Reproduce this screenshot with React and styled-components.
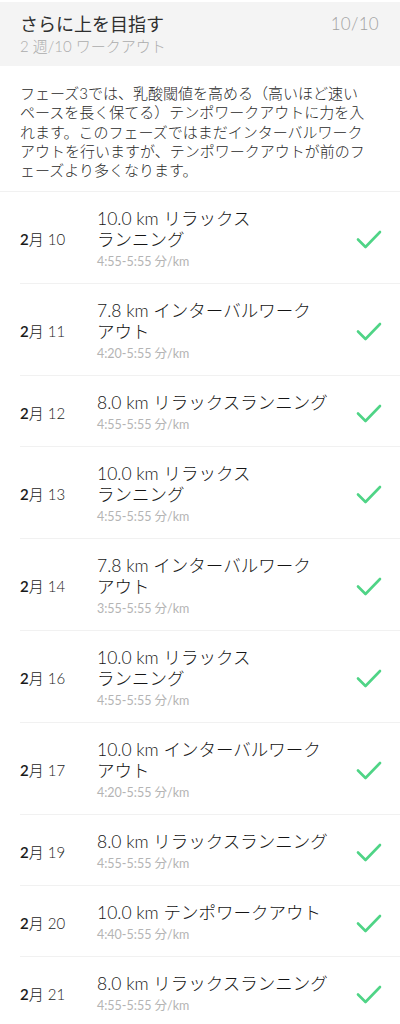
import React from "react";
import styled, { createGlobalStyle } from "styled-components";

const GlobalStyle = createGlobalStyle`
  html, body { margin: 0; padding: 0; background: #ffffff; }
  body {
    font-family: "Lato", "Noto Sans CJK JP", sans-serif;
    -webkit-font-smoothing: antialiased;
  }
`;

const Page = styled.div`
  width: 400px;
  background: #ffffff;
  padding-top: 2px;
`;

const Header = styled.header`
  background: #f4f4f4;
  height: 64px;
  padding: 0 21px 0 20px;
  box-sizing: border-box;
  display: grid;
  grid-template-columns: 1fr auto;
  align-content: center;
`;

const HeaderTitle = styled.h1`
  margin: 0;
  font-size: 18px;
  font-weight: 400;
  line-height: 24px;
  color: #2e2e2e;
`;

const Counter = styled.span`
  font-size: 17px;
  font-weight: 300;
  line-height: 24px;
  color: #a2a2a2;
  letter-spacing: 0.3px;
`;

const HeaderSub = styled.div`
  grid-column: 1 / span 2;
  font-size: 15px;
  font-weight: 300;
  line-height: 20px;
  color: #acacac;
`;

const Description = styled.p`
  margin: 0;
  padding: 18px 20px 11px 20px;
  font-size: 15px;
  font-weight: 300;
  line-height: 19.3px;
  color: #2a2a2a;
  border-bottom: 1px solid #f1f1f1;
`;

const List = styled.ul`
  list-style: none;
  margin: 0;
  padding: 0;
`;

const Row = styled.li`
  position: relative;
  display: grid;
  grid-template-columns: 77px 1fr 44px;
  align-items: center;
  padding: 16px 0 13px 20px;
  &:not(:first-child)::before {
    content: "";
    position: absolute;
    top: 0;
    left: 20px;
    right: 0;
    height: 1px;
    background: #f1f1f1;
  }
  &:not(:first-child) {
    padding-top: 17px;
  }
`;

const DateLabel = styled.div`
  font-size: 15px;
  font-weight: 300;
  color: #1a1a1a;
  line-height: 20px;
`;

const Month = styled.span`
  font-weight: 600;
`;

const Body = styled.div`
  display: flex;
  flex-direction: column;
`;

const Title = styled.div`
  font-size: 17.5px;
  font-weight: 300;
  line-height: 21px;
  color: #151515;
  white-space: pre-line;
`;

const Pace = styled.div`
  margin-top: 4px;
  font-size: 12.5px;
  font-weight: 400;
  line-height: 16px;
  color: #b4b4b4;
`;

const Check = styled.svg`
  width: 26px;
  height: 20px;
  justify-self: start;
`;

const CheckIcon = () => (
  <Check viewBox="0 0 26 20" aria-hidden="true">
    <path
      d="M2 10.5 L9.5 18 L24 3"
      fill="none"
      stroke="#4fd486"
      strokeWidth="2.6"
      strokeLinecap="round"
      strokeLinejoin="round"
    />
  </Check>
);

const workouts = [
  { d: "10", t: "10.0 km リラックス\nランニング", p: "4:55-5:55 分/km" },
  { d: "11", t: "7.8 km インターバルワーク\nアウト", p: "4:20-5:55 分/km" },
  { d: "12", t: "8.0 km リラックスランニング", p: "4:55-5:55 分/km" },
  { d: "13", t: "10.0 km リラックス\nランニング", p: "4:55-5:55 分/km" },
  { d: "14", t: "7.8 km インターバルワーク\nアウト", p: "3:55-5:55 分/km" },
  { d: "16", t: "10.0 km リラックス\nランニング", p: "4:55-5:55 分/km" },
  { d: "17", t: "10.0 km インターバルワーク\nアウト", p: "4:20-5:55 分/km" },
  { d: "19", t: "8.0 km リラックスランニング", p: "4:55-5:55 分/km" },
  { d: "20", t: "10.0 km テンポワークアウト", p: "4:40-5:55 分/km" },
  { d: "21", t: "8.0 km リラックスランニング", p: "4:55-5:55 分/km" },
];

export default function App() {
  return (
    <Page>
      <GlobalStyle />
      <Header>
        <HeaderTitle>さらに上を目指す</HeaderTitle>
        <Counter>10/10</Counter>
        <HeaderSub>2 週/10 ワークアウト</HeaderSub>
      </Header>
      <Description>
        フェーズ3では、乳酸閾値を高める（高いほど速い
        <br />
        ペースを長く保てる）テンポワークアウトに力を入
        <br />
        れます。このフェーズではまだインターバルワーク
        <br />
        アウトを行いますが、テンポワークアウトが前のフ
        <br />
        ェーズより多くなります。
      </Description>
      <List>
        {workouts.map((w) => (
          <Row key={w.d}>
            <DateLabel>
              <Month>2</Month>月 {w.d}
            </DateLabel>
            <Body>
              <Title>{w.t}</Title>
              <Pace>{w.p}</Pace>
            </Body>
            <CheckIcon />
          </Row>
        ))}
      </List>
    </Page>
  );
}
